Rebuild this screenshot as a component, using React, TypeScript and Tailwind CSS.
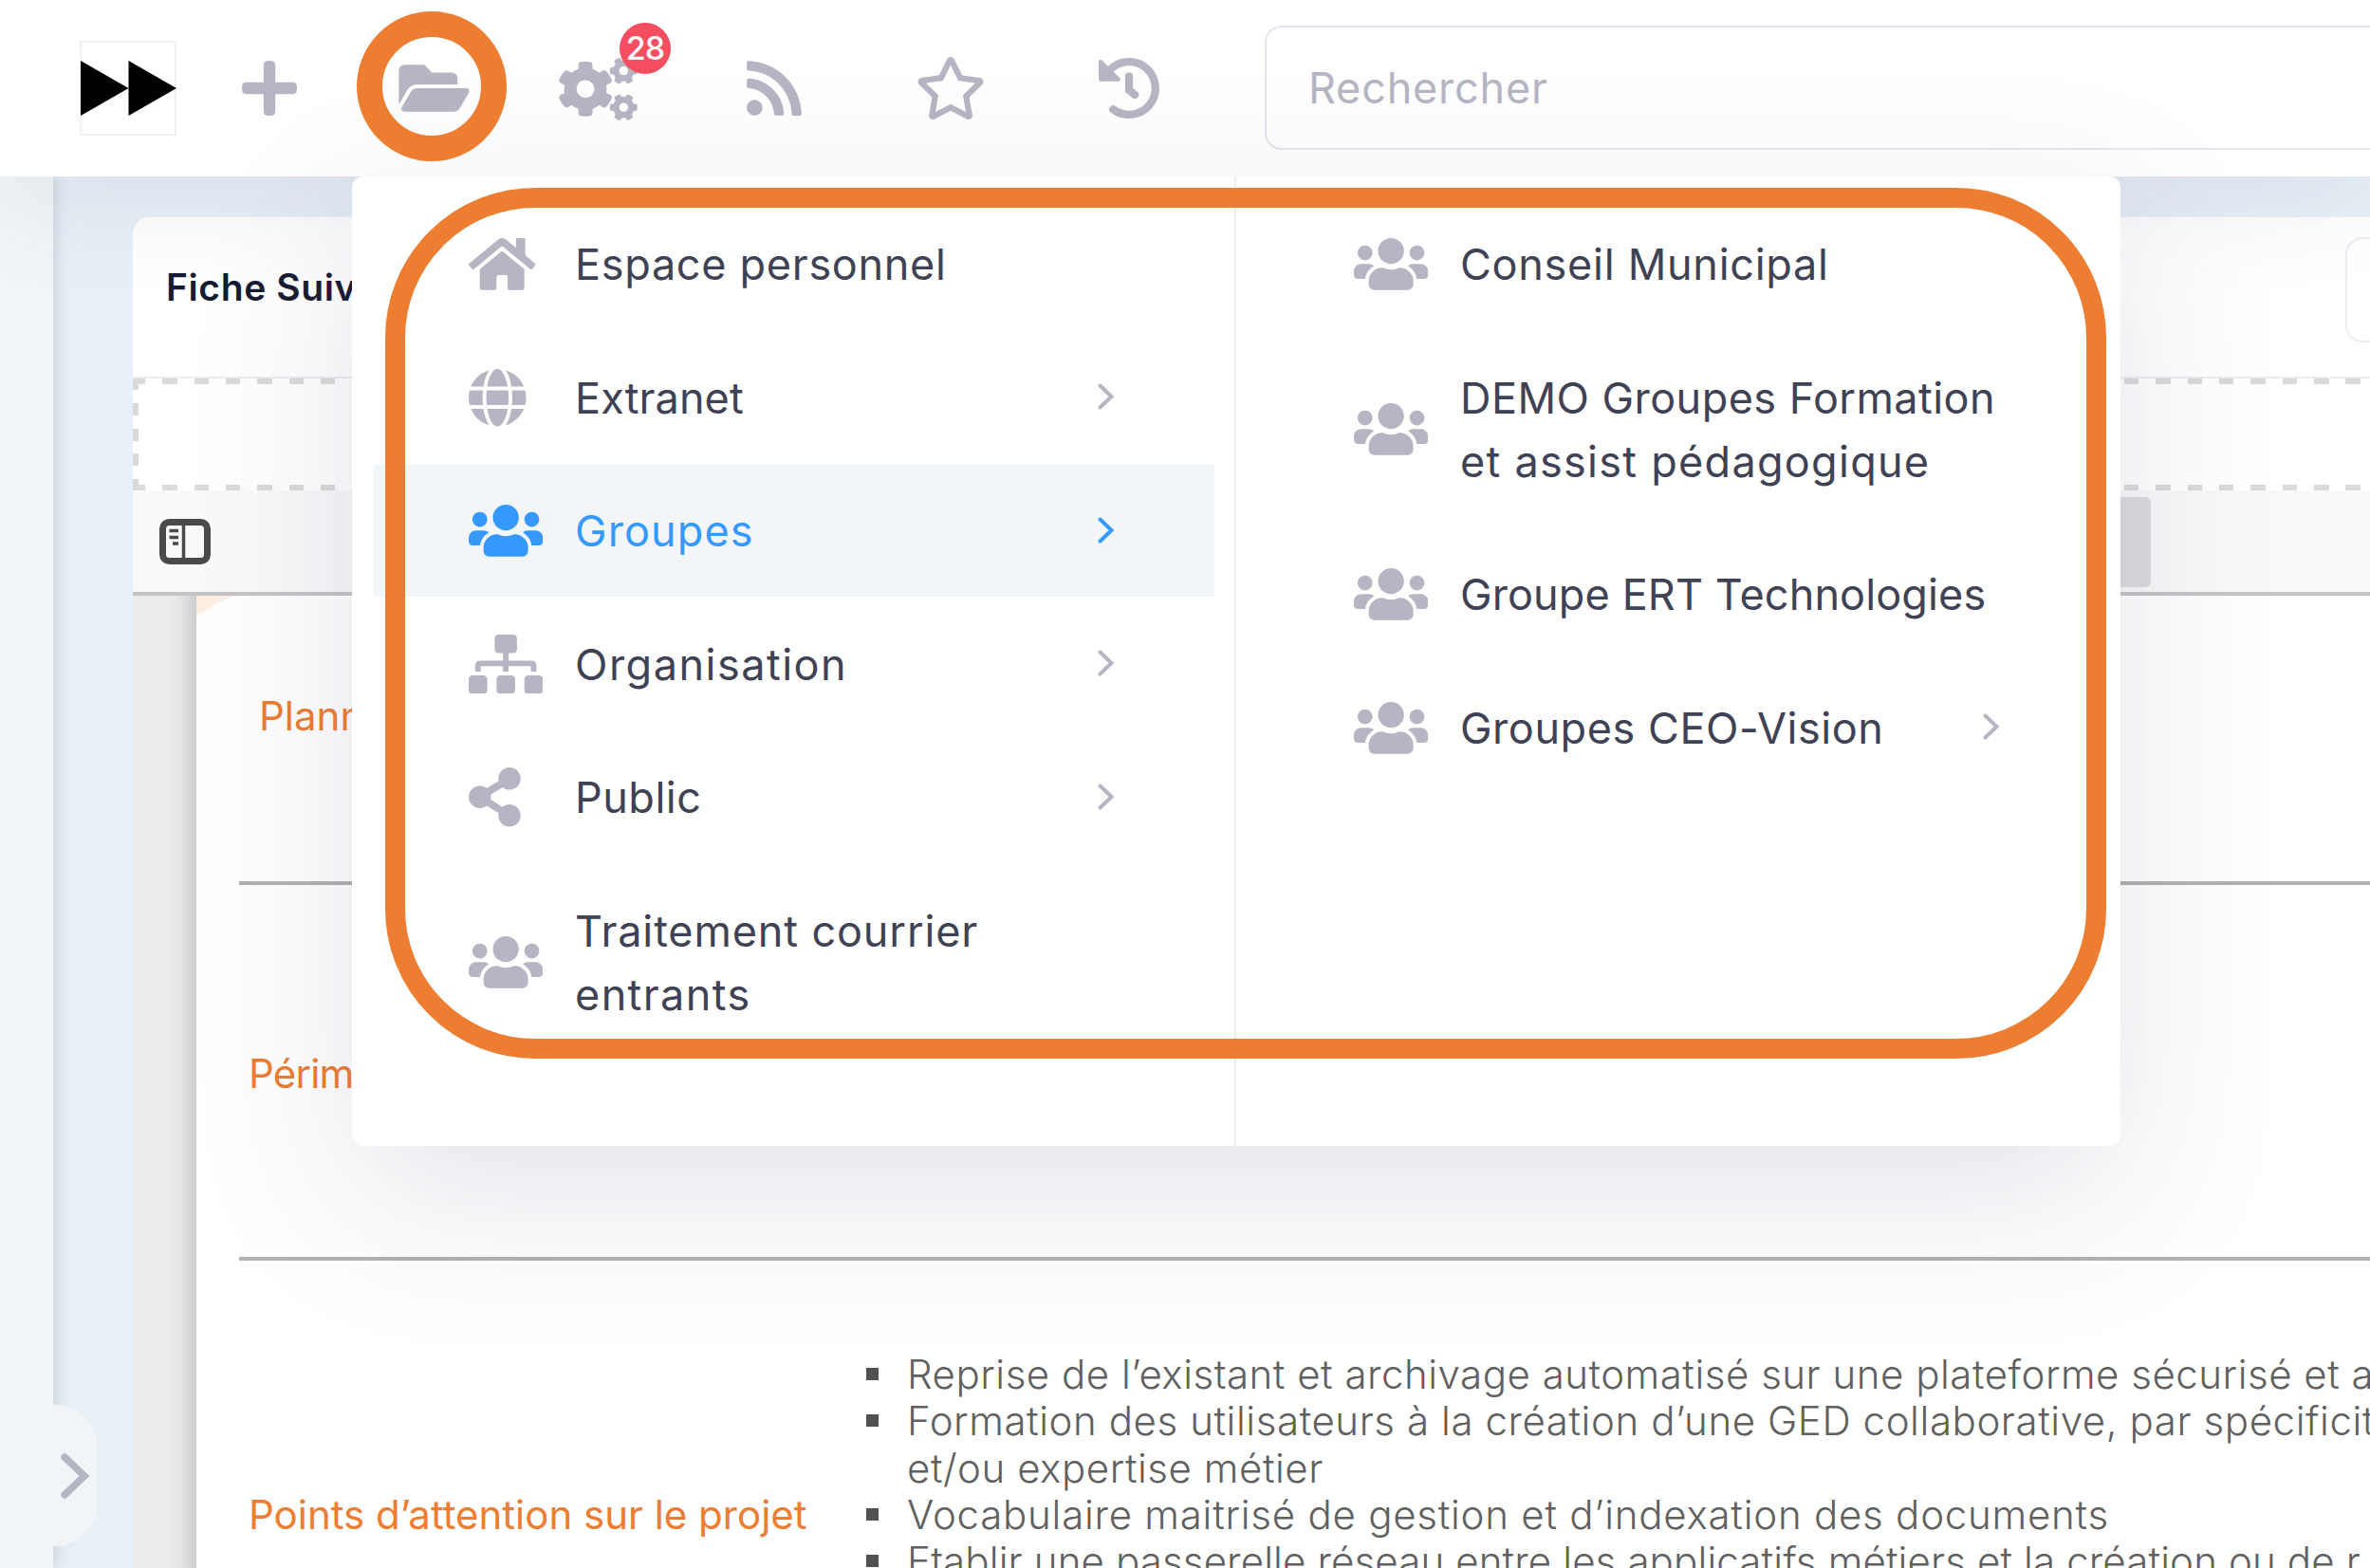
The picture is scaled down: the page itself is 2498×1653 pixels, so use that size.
import React from "react";
import {
  FaCogs,
  FaFolderOpen,
  FaGlobe,
  FaHistory,
  FaHome,
  FaPlus,
  FaRegStar,
  FaRss,
  FaShareAlt,
  FaSitemap,
  FaUsers,
} from "react-icons/fa";

type Line = { text: string; spacing: string };

type Item = {
  icon: React.ReactNode;
  lines: Line[];
  arrow?: boolean;
  active?: boolean;
};

const users = <FaUsers className="h-[62.6px] w-[78.3px]" />;

const mainItems: Item[] = [
  {
    icon: <FaHome className="h-[62.6px] w-[70.4px]" />,
    lines: [{ text: "Espace personnel", spacing: "tracking-[0.7px]" }],
  },
  {
    icon: <FaGlobe className="h-[62.6px] w-[60.6px]" />,
    lines: [{ text: "Extranet", spacing: "tracking-[0.1px]" }],
    arrow: true,
  },
  {
    icon: users,
    lines: [{ text: "Groupes", spacing: "tracking-[1.1px]" }],
    arrow: true,
    active: true,
  },
  {
    icon: <FaSitemap className="h-[62.6px] w-[78.3px]" />,
    lines: [{ text: "Organisation", spacing: "tracking-[1.5px]" }],
    arrow: true,
  },
  {
    icon: <FaShareAlt className="h-[62.6px] w-[54.8px]" />,
    lines: [{ text: "Public", spacing: "tracking-[0.5px]" }],
    arrow: true,
  },
  {
    icon: users,
    lines: [
      { text: "Traitement courrier", spacing: "tracking-[0.88px]" },
      { text: "entrants", spacing: "tracking-[1.4px]" },
    ],
  },
];

const groupItems: Item[] = [
  { icon: users, lines: [{ text: "Conseil Municipal", spacing: "tracking-[0.72px]" }] },
  {
    icon: users,
    lines: [
      { text: "DEMO Groupes Formation", spacing: "tracking-[0.45px]" },
      { text: "et assist pédagogique", spacing: "tracking-[1.28px]" },
    ],
  },
  { icon: users, lines: [{ text: "Groupe ERT Technologies", spacing: "tracking-[0.12px]" }] },
  {
    icon: users,
    lines: [{ text: "Groupes CEO-Vision", spacing: "tracking-[0.55px]" }],
    arrow: true,
  },
];

function Chevron() {
  return (
    <svg viewBox="0 0 18 28" className="-mt-[2px] h-[28px] w-[18px] shrink-0" fill="none">
      <path d="M2.500 2.500 L14.500 14 L2.500 25.500" stroke="currentColor" strokeWidth="4" strokeLinecap="round" />
    </svg>
  );
}

function MenuItem({ item }: { item: Item }) {
  return (
    <li
      className={
        item.active
          ? "flex items-center bg-[#f3f6f9] py-[36px] pr-[105px] pl-[100px] text-[#3699ff]"
          : "flex items-center py-[36px] pr-[105px] pl-[100px] text-[#b5b5c3]"
      }
    >
      <span className="flex w-[112px] shrink-0 items-center">{item.icon}</span>
      <span
        className={
          item.active
            ? "flex-1 text-[45px] leading-[67px] whitespace-nowrap text-[#3699ff]"
            : "flex-1 text-[45px] leading-[67px] whitespace-nowrap text-[#3f4254]"
        }
      >
        {item.lines.map((l) => (
          <span key={l.text} className={`block ${l.spacing}`}>
            {l.text}
          </span>
        ))}
      </span>
      {item.arrow && <Chevron />}
    </li>
  );
}

function Header() {
  return (
    <header className="relative z-10 flex h-[186px] shrink-0 items-center bg-white pl-[84px] text-[#b5b5c3] shadow-[0_34px_103px_0_rgba(82,63,105,0.08)]">
      <div className="flex h-[100px] w-[102px] shrink-0 items-center border-2 border-[#f1f1f1]">
        <svg viewBox="0 0 100 58" className="-ml-px h-[58px] w-[101px] shrink-0" preserveAspectRatio="none" fill="#000">
          <path d="M0 0 L50 29 L0 58 Z M50 0 L100 29 L50 58 Z" />
        </svg>
      </div>
      <FaPlus className="ml-[69px] h-[66px] w-[58px] shrink-0" />
      <FaFolderOpen className="ml-[106.500px] h-[66px] w-[75px] shrink-0" />
      <div className="relative ml-[94.500px] flex h-[70px] w-[83px] shrink-0 items-center">
        <FaCogs className="mt-[1px] h-[66px] w-[83px]" />
        <span className="absolute -top-[34px] left-[64px] flex size-[54px] items-center justify-center rounded-full bg-[#f64e60] text-[34px] leading-none font-medium tracking-[-1px] text-white">
          28
        </span>
      </div>
      <FaRss className="ml-[115px] h-[66px] w-[58px] shrink-0" />
      <FaRegStar className="ml-[119px] h-[66px] w-[76px] shrink-0" />
      <FaHistory className="ml-[116.500px] h-[66px] w-[66px] shrink-0" />
      <div className="-mt-px ml-[110.500px] flex h-[131px] flex-1 items-center rounded-l-[18px] border-2 border-r-0 border-[#e4e6ef] pl-[44px] text-[45px] tracking-[0.8px]">
        Rechercher
      </div>
    </header>
  );
}

function DashRow() {
  return (
    <div className="h-[6px] bg-[repeating-linear-gradient(90deg,#dadada_0,#dadada_13.4px,transparent_13.4px,transparent_31.35px,#dadada_31.35px,#dadada_33.35px)]" />
  );
}

function Bullet({ text, spacing, plain }: { text: string; spacing: string; plain?: boolean }) {
  return (
    <li className="flex h-[49.3px] items-center whitespace-nowrap">
      <span className={plain ? "mr-[30px] size-[13px] shrink-0" : "mr-[30px] size-[13px] shrink-0 bg-[#505050]"} />
      <span className={spacing}>{text}</span>
    </li>
  );
}

function DocumentPage() {
  return (
    <div className="flex h-[1025px] bg-[#ececee]">
      <div className="w-[67px] shrink-0 bg-[linear-gradient(90deg,#ececee_0,#ececee_40px,#e2e2e4_52px,#cdcdcf_67px)]" />
      <div className="relative flex-1 bg-white pl-[45px] text-[42px] text-[#606060]">
        <svg viewBox="0 0 40 22" className="absolute top-0 left-0 h-[22px] w-[40px]" fill="#fdeee4">
          <path d="M0 0 H40 Q22 6 0 22 Z" />
        </svg>
        <section className="flex h-[305px] items-center border-b-4 border-[#b2b2b2] pl-[21px] text-[#ed7d31]">
          <span className="-mt-[49px]">Planning</span>
        </section>
        <section className="flex h-[396px] items-center border-b-4 border-[#b2b2b2] pl-[10px] text-[#ed7d31]">
          <span className="mt-[4px] tracking-[-0.8px]">Périmètre</span>
        </section>
        <section className="flex pt-[95px] pl-[10px]">
          <h3 className="mt-[148px] h-[50px] w-[651px] shrink-0 leading-[50px] whitespace-nowrap text-[#ed7d31]">
            Points d’attention sur le projet
          </h3>
          <ul className="shrink-0 font-light">
            <Bullet
              text="Reprise de l’existant et archivage automatisé sur une plateforme sécurisé et a"
              spacing="tracking-[0.52px]"
            />
            <Bullet
              text="Formation des utilisateurs à la création d’une GED collaborative, par spécificit"
              spacing="tracking-[0.58px]"
            />
            <Bullet plain text="et/ou expertise métier" spacing="tracking-[0.54px]" />
            <Bullet
              text="Vocabulaire maitrisé de gestion et d’indexation des documents"
              spacing="tracking-[0.76px]"
            />
            <Bullet
              text="Etablir une passerelle réseau entre les applicatifs métiers et la création ou de r"
              spacing="tracking-[0.14px]"
            />
          </ul>
        </section>
      </div>
    </div>
  );
}

function DocumentCard() {
  return (
    <main className="mt-[43px] flex h-[1424px] flex-1 flex-col overflow-hidden rounded-tl-[18px] bg-white">
      <div className="flex h-[170px] shrink-0 justify-between border-b-2 border-[#ebedf3] pt-[21px]">
        <h2 className="pt-[20px] pl-[35px] text-[39px] leading-[66px] font-semibold tracking-[0.6px] text-[#181c32]">
          Fiche Suivi
        </h2>
        <div className="h-[111px] w-[26px] rounded-l-[18px] border-2 border-r-0 border-[#ebedf3]" />
      </div>
      <div className="flex h-[118px] shrink-0 flex-col justify-between">
        <DashRow />
        <div className="h-[106px] w-[6px] bg-[repeating-linear-gradient(180deg,#dadada_0,#dadada_6px,transparent_6px,transparent_20px,#dadada_20px,#dadada_33px,transparent_33px,transparent_46.5px,#dadada_46.5px,#dadada_59.5px,transparent_59.5px,transparent_73px,#dadada_73px,#dadada_86px,transparent_86px,transparent_100px,#dadada_100px,#dadada_106px)]" />
        <DashRow />
      </div>
      <div className="flex h-[111px] shrink-0 border-b-4 border-[#c4c4c6] bg-[#f9f9fa] pt-[7px]">
        <svg viewBox="0 0 54 48" className="mt-[23px] ml-[28px] h-[48px] w-[54px] shrink-0" fill="none" stroke="#4a4a4a">
          <rect x="3.5" y="3.5" width="47" height="41" rx="7" strokeWidth="7" />
          <path d="M25.5 5 V43" strokeWidth="3.5" />
          <path d="M10.5 12.5 H20 M10.5 19.5 H20 M14 26 H20" strokeWidth="3.5" />
        </svg>
        <div className="ml-[1645px] h-[95px] w-[400px] rounded-[6px] bg-[#dcdcde]" />
      </div>
      <DocumentPage />
    </main>
  );
}

export default function App() {
  return (
    <div className="relative flex h-[1653px] w-[2498px] flex-col overflow-hidden bg-[#e8f0f7] font-['Inter',sans-serif]">
      <Header />
      <div className="flex h-[1467px]">
        <aside className="relative w-[56px] shrink-0 bg-[#f1f5f8] shadow-[3px_0_14px_0_rgba(60,70,90,0.18)]">
          <button className="absolute top-[1295px] left-0 flex h-[149px] w-[103px] items-center justify-end rounded-r-[46px] bg-[#f1f5f8] pr-[8px]">
            <svg viewBox="0 0 31 48" className="h-[48px] w-[31px]" fill="none">
              <path d="M4 4 L25 24 L4 44" stroke="#b5b5c3" strokeWidth="7.500" strokeLinecap="round" />
            </svg>
          </button>
        </aside>
        <div className="flex w-[2442px] pl-[84px]">
          <DocumentCard />
        </div>
      </div>

      <nav className="absolute top-[186px] left-[371px] z-20 flex h-[1022px] w-[1864px] rounded-[12px] bg-white shadow-[0_51px_172px_0_rgba(82,63,105,0.15)]">
        <ul className="flex w-[932px] shrink-0 flex-col gap-[1.5px] border-r-2 border-[#ebedf3] pt-[23px] pr-[21px] pl-[23px]">
          {mainItems.map((item) => (
            <MenuItem key={item.lines[0].text} item={item} />
          ))}
        </ul>
        <ul className="flex flex-1 flex-col gap-[1.5px] pt-[23px] pr-[22px] pl-[24px]">
          {groupItems.map((item) => (
            <MenuItem key={item.lines[0].text} item={item} />
          ))}
        </ul>
      </nav>

      <div className="absolute top-[12px] left-[376px] z-30 size-[158px] rounded-full border-[27px] border-[#ed7d31]" />
      <div className="absolute top-[198px] left-[406px] z-30 h-[918px] w-[1814px] rounded-[158px] border-[21px] border-[#ed7d31]" />
    </div>
  );
}
